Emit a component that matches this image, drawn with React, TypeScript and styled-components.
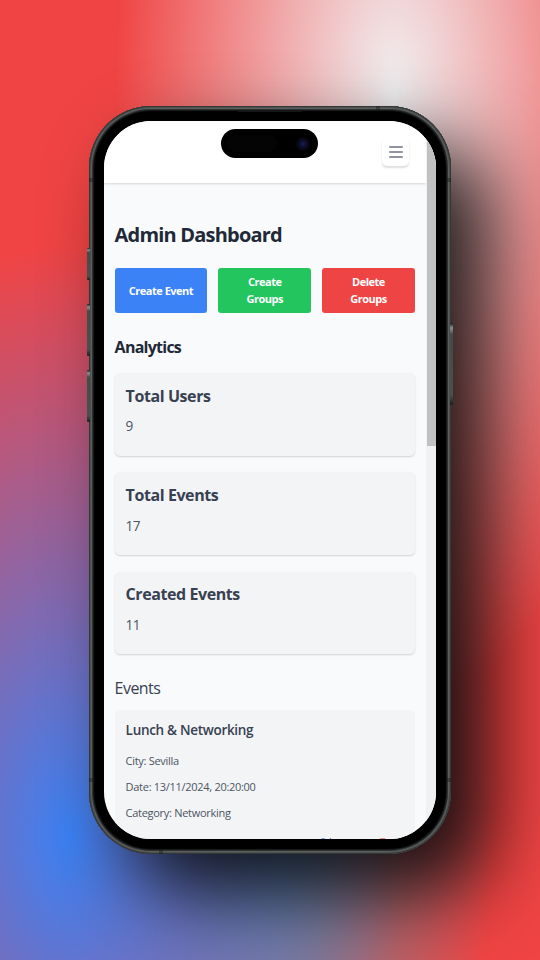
import React from "react";
import styled, { createGlobalStyle } from "styled-components";

const GlobalStyle = createGlobalStyle`
  *, *::before, *::after { box-sizing: border-box; }
  html, body { margin: 0; padding: 0; }
  body { font-family: "Open Sans", "Noto Sans", sans-serif; overflow: hidden; }
  h1, h2, h3, p { margin: 0; }
  button { font: inherit; border: 0; padding: 0; cursor: pointer; }
`;

const Backdrop = styled.div`
  width: 540px;
  height: 960px;
  overflow: hidden;
  padding: 105.5px 0 0 89px;
  background:
    radial-gradient(at 73% 10%, #f1f1f3 0, transparent 50%),
    radial-gradient(at 13% 87%, #3b82f6 0, transparent 50%),
    radial-gradient(at 54% 80%, #6494a4 0, transparent 50%),
    #f04444;
`;

const Phone = styled.div`
  position: relative;
  width: 361.5px;
  height: 748px;
  padding: 15.5px 15px 14.5px 15.3px;
  border-radius: 62px;
  background: #000;
  box-shadow:
    inset 0 0 0 1px #343837,
    inset 0 0 0 2px #4c504f,
    inset 0 0 0 3px #5a5e5d,
    inset 0 0 0 4px #2e3130,
    inset 0 0 1px 5px #1b1d1d,
    40px 40px 80px rgba(0, 0, 0, 0.85);
`;

const SideKey = styled.span<{ $side: "left" | "right"; $top: number; $length: number }>`
  position: absolute;
  ${(p) => p.$side}: -2px;
  top: ${(p) => p.$top}px;
  width: 2.5px;
  height: ${(p) => p.$length}px;
  border-radius: 1px;
  background: linear-gradient(#1c1e1e, #8b8f8e 6%, #454948 14%, #4b4f4e 88%, #1c1e1e);
`;

const Antenna = styled.span<{ $x?: number; $y?: number; $edge: "left" | "right" | "top" | "bottom" }>`
  position: absolute;
  ${(p) => p.$edge}: 0;
  width: 4px;
  height: 4px;
  ${(p) => (p.$y !== undefined ? `top: ${p.$y}px;` : "")}
  ${(p) => (p.$x !== undefined ? `left: ${p.$x}px;` : "")}
  background: rgba(20, 22, 22, 0.4);
`;

const Speaker = styled.span`
  position: absolute;
  top: 4px;
  left: 148px;
  width: 66px;
  height: 2.5px;
  border-radius: 0 0 2px 2px;
  background: #151717;
`;

const Screen = styled.div`
  position: relative;
  display: flex;
  width: 100%;
  height: 100%;
  overflow: hidden;
  border-radius: 47px;
  background: #f9fafb;
`;

const Island = styled.div`
  position: absolute;
  top: 8px;
  left: 117px;
  width: 97px;
  height: 29px;
  border-radius: 15px;
  background: #000;
  display: flex;
  align-items: center;
  justify-content: space-between;
  padding: 0 8px 0 6px;
`;

const Sensor = styled.span`
  width: 50px;
  height: 17px;
  border-radius: 9px;
  background: #040404;
`;

const Lens = styled.span`
  width: 14px;
  height: 14px;
  border-radius: 50%;
  background: radial-gradient(circle, #1d1d5c 0, #10103a 25%, #090914 50%, #060608 72%);
`;

const Page = styled.div`
  flex: 1;
  min-width: 0;
  height: 100%;
`;

const ScrollTrack = styled.div`
  width: 9.7px;
  height: 100%;
  padding-left: 1px;
  background: #f1f1f1;
`;

const ScrollThumb = styled.div`
  height: 324.5px;
  background: #c1c1c1;
`;

const Header = styled.header`
  display: flex;
  justify-content: flex-end;
  height: 62px;
  padding: 17px 16.5px 0 0;
  background: #fff;
  box-shadow: 0 1px 2px rgba(0, 0, 0, 0.15);
`;

const MenuButton = styled.button`
  display: flex;
  align-items: center;
  justify-content: center;
  width: 27px;
  height: 28px;
  border-radius: 5px;
  background: #fff;
  box-shadow: 0 1.5px 2px rgba(0, 0, 0, 0.13);
`;

const Main = styled.main`
  padding: 0 11px 0 10.3px;
`;

const Title = styled.h1`
  margin-top: 38px;
  color: #1f2937;
  font-size: 20px;
  font-weight: 700;
  line-height: 28px;
  letter-spacing: -0.8px;
`;

const Actions = styled.div`
  display: grid;
  grid-template-columns: repeat(3, 1fr);
  gap: 11px;
  margin-top: 19.3px;
`;

const Action = styled.button<{ $color: string }>`
  height: 44.3px;
  padding: 0 20px;
  border-radius: 3px;
  background: ${(p) => p.$color};
  color: #fff;
  font-size: 11px;
  font-weight: 700;
  line-height: 17px;
  letter-spacing: -0.5px;
`;

const WideAction = styled(Action)`
  padding: 0;
  white-space: nowrap;
`;

const SectionTitle = styled.h2`
  margin-top: 22px;
  color: #1f2937;
  font-size: 16px;
  font-weight: 700;
  line-height: 24px;
  letter-spacing: -0.75px;
`;

const EventsTitle = styled(SectionTitle)`
  color: #374151;
  font-weight: 500;
  letter-spacing: -0.55px;
`;

const Stats = styled.div`
  display: grid;
  gap: 16.8px;
  margin-top: 14.6px;
`;

const Stat = styled.section`
  height: 82.5px;
  padding: 10.4px 11px;
  border-radius: 5.5px;
  background: #f3f4f6;
  box-shadow: 0 1px 2px rgba(0, 0, 0, 0.16);
`;

const StatLabel = styled.h3`
  color: #374151;
  font-size: 16px;
  font-weight: 700;
  line-height: 24px;
  letter-spacing: -0.42px;
`;

const StatValue = styled.p`
  margin-top: 8.8px;
  color: #4b5563;
  font-size: 13.6px;
  line-height: 20px;
  letter-spacing: -0.5px;
`;

const EventCard = styled.article`
  margin-top: 9.4px;
  height: 180px;
  padding: 11px;
  border-radius: 5.5px;
  background: #f3f4f6;
`;

const EventName = styled.h3`
  margin-bottom: 13.2px;
  color: #374151;
  font-size: 13.5px;
  font-weight: 600;
  line-height: 19px;
  letter-spacing: -0.3px;
`;

const EventFact = styled.p`
  margin-bottom: 9.5px;
  color: #4b5563;
  font-size: 11px;
  line-height: 16.5px;
  letter-spacing: -0.29px;
`;

const EventTools = styled.div`
  display: flex;
  justify-content: flex-end;
  gap: 11px;
  margin-top: 8.6px;
`;

const ToolButton = styled.button`
  display: flex;
  justify-content: center;
  width: 44px;
  height: 30px;
  padding-top: 7px;
  border-radius: 5px;
  background: #f3f4f6;
  box-shadow: 0 1px 1px rgba(0, 0, 0, 0.07);
`;

const stats = [
  { label: "Total Users", value: 9 },
  { label: "Total Events", value: 17 },
  { label: "Created Events", value: 11 },
];

export default function App() {
  return (
    <>
      <GlobalStyle />
      <Backdrop>
        <Phone>
          <SideKey $side="left" $top={142.5} $length={32} />
          <SideKey $side="left" $top={198.5} $length={52} />
          <SideKey $side="left" $top={264.5} $length={52} />
          <SideKey $side="right" $top={217.5} $length={82} />
          <Antenna $edge="left" $y={72} />
          <Antenna $edge="right" $y={72} />
          <Antenna $edge="left" $y={672} />
          <Antenna $edge="right" $y={672} />
          <Antenna $edge="top" $x={287} />
          <Antenna $edge="bottom" $x={70} />
          <Speaker />
          <Screen>
            <Page>
              <Header>
                <MenuButton aria-label="Menu">
                  <svg width="14" height="12" viewBox="0 0 14 12" stroke="#6b7280" strokeWidth="1.5" strokeLinecap="round">
                    <path d="M.75 1h12.5M.75 6h12.5M.75 11h12.5" />
                  </svg>
                </MenuButton>
              </Header>
              <Main>
                <Title>Admin Dashboard</Title>
                <Actions>
                  <WideAction $color="#3b82f6">Create Event</WideAction>
                  <Action $color="#22c55e">Create Groups</Action>
                  <Action $color="#ef4444">Delete Groups</Action>
                </Actions>
                <SectionTitle>Analytics</SectionTitle>
                <Stats>
                  {stats.map((s) => (
                    <Stat key={s.label}>
                      <StatLabel>{s.label}</StatLabel>
                      <StatValue>{s.value}</StatValue>
                    </Stat>
                  ))}
                </Stats>
                <EventsTitle>Events</EventsTitle>
                <EventCard>
                  <EventName>Lunch &amp; Networking</EventName>
                  <EventFact>City: Sevilla</EventFact>
                  <EventFact>Date: 13/11/2024, 20:20:00</EventFact>
                  <EventFact>Category: Networking</EventFact>
                  <EventTools>
                    <ToolButton aria-label="Edit">
                      <svg width="14" height="14" viewBox="0 0 14 14" fill="none" stroke="#2563eb" strokeWidth="1.4">
                        <path d="M5 1.2H2v11h10V8M5 9l1-3 4.5-5 2 2-4.5 5z" />
                      </svg>
                    </ToolButton>
                    <ToolButton aria-label="Delete">
                      <svg width="14" height="14" viewBox="0 0 14 14" fill="#dc2626">
                        <path d="M5 .5h5l.8 1H13v1.5H2V1.500h2.200zM3 4h9l-.6 9.500H3.600z" />
                      </svg>
                    </ToolButton>
                  </EventTools>
                </EventCard>
              </Main>
            </Page>
            <ScrollTrack>
              <ScrollThumb />
            </ScrollTrack>
            <Island>
              <Sensor />
              <Lens />
            </Island>
          </Screen>
        </Phone>
      </Backdrop>
    </>
  );
}
